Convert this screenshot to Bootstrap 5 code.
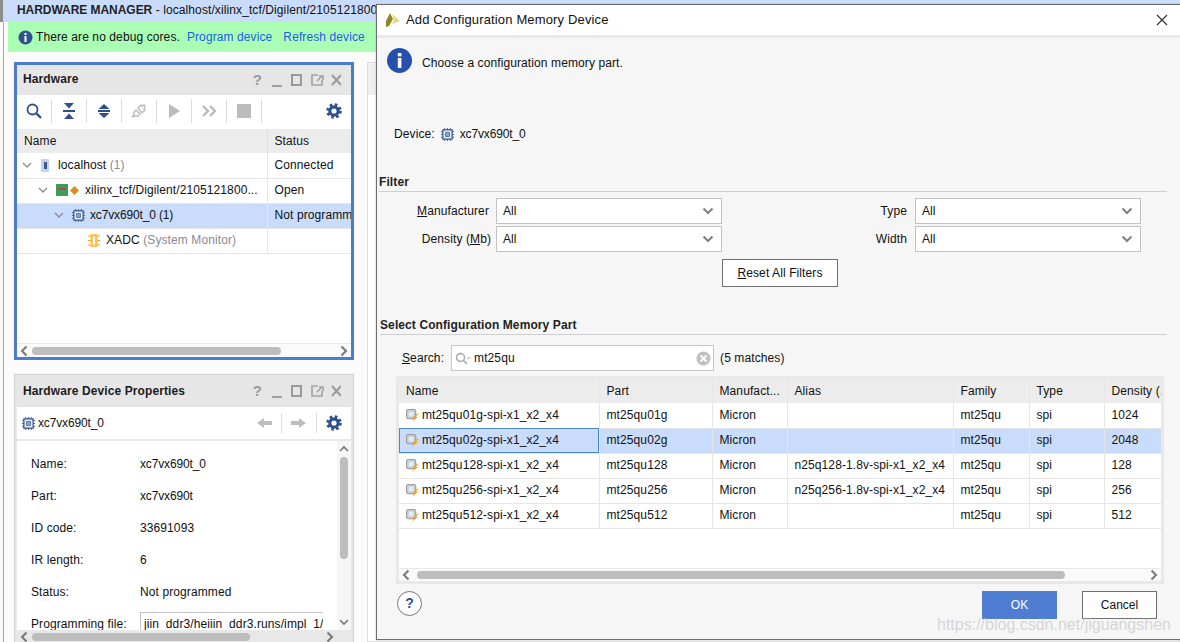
<!DOCTYPE html>
<html lang="en"><head><meta charset="utf-8"><title>Add Configuration Memory Device</title>
<link href="https://cdn.jsdelivr.net/npm/bootstrap@5.3.0/dist/css/bootstrap.min.css" rel="stylesheet">
<style>
html,body{margin:0;height:642px;overflow:hidden;background:#fff}
body{font-family:"Liberation Sans",Arial,sans-serif;font-size:12px;color:#111;line-height:1.2;letter-spacing:.1px}
.app{position:relative;width:1180px;height:642px;overflow:hidden;background:#fbfbfb}
.hm-bar{height:22px;background:#c9dcfb;border-left:3px solid #8d8d8d;padding:0 0 0 14px;line-height:20px;white-space:nowrap;overflow:hidden}
.hm-bar b{font-weight:700;color:#222;letter-spacing:-.05px}
.wsp{height:620px;border-left:1px solid #a8a8a8;margin-left:3px;padding-left:4px}
.dbg{height:30px;background:#aaffb5;padding-left:10px;gap:3px}
.dbg a{color:#1a5fe8;text-decoration:none;margin-left:4px}
.dbg a+a{margin-left:8px}
.paneswrap{padding:10px 0 0 6px;gap:13px}
.pcol{width:340px;flex:none}
.stub{flex:1;height:580px;background:#fff;border:1px solid #ddd}
.stubhd{height:32px;background:#eee}
.pane-a{height:298px;border:3px solid #4a7dcf;background:#fff;display:flex;flex-direction:column}
.pane-b{margin-top:14px;height:270px;border:1px solid #cfcfcf;border-bottom:0;padding:0 2px;background:#e8e8e8;display:flex;flex-direction:column}
.phead{height:30px;background:#e6e6e6;padding:0 6px;flex:none;font-weight:700;color:#1c1c1c}
.pane-b .phead{height:32px;margin:0 -2px;padding:0 8px}
.phead .ttl{position:relative;top:-1px}
.pane-b .phead .ttl{top:0}
.hicons{gap:9px;margin-right:4px;color:#9a9a9a;font-size:15px;font-weight:700;line-height:16px}
.hicons svg{display:block}
.tbar{height:32px;background:#fff;flex:none}
.tbtn{width:35px;height:24px;border-right:1px solid #ddd;justify-content:center}
.tend{margin-left:auto;margin-right:9px}
.trv{table-layout:fixed;width:334px;margin:2px 0 0;border-collapse:collapse;background:#fff;flex:none}
.trv td,.trv th{height:25px;padding:0 7px;font-weight:400;border-bottom:1px solid #e6e6e6;border-right:1px solid #e6e6e6;white-space:nowrap;overflow:hidden;background:transparent;box-shadow:none;color:#111;vertical-align:middle}
.trv th{height:24px;background:#ececec;border-bottom:0;border-right:1px solid #e0e0e0}
.trv td:last-child,.trv th:last-child{border-right:0}
.trv .sel td{background:#c9dcfb}
.c0{width:250px}
.dim{color:#8a8a94}
.chipn{letter-spacing:-.15px}
.tcell{gap:5px;white-space:nowrap;margin-left:-3px}
.ind1{padding-left:16px}
.ind2{padding-left:32px}
.ind3{padding-left:67px}
.ml2{margin-left:2px}
.ml3{margin-left:3px}
.dmd{margin-left:-3px}
.xt{margin-left:1px}
.hspc{flex:1}
.sbar-h{height:14px;flex:none;background:#fafafa;border-top:1px solid #e8e8e8;padding:0 2px}
.sbar-h .thumb{height:8px;background:#bdbdbd;border-radius:4px}
.sbar-h .trk{flex:1;padding:0 3px}
.th1{width:249px}
.th2{width:218px}
.th3{width:648px;margin-left:3px}
.sub{height:32px;margin:0 0 2px;background:#fff;flex:none;padding:0 9px 0 5px}
.sub .cn{margin-left:3px}
.navg{gap:8px}
.vsep{height:20px;border-left:1px solid #ddd}
.gr{margin-left:1px}
.ar{margin-right:2px}
.prow{flex:1;min-height:0;background:#fff;overflow:hidden}
.pbody{flex:1;padding:7px 14px 0;overflow:hidden;min-width:0}
.kv{height:32px;white-space:nowrap}
.kv .k{width:109px;flex:none}
.fileb{flex:1;height:24px;border:1px solid #c4c4c4;border-right:0;padding:4px 2px 0 3px;overflow:hidden;white-space:nowrap}
.sbar-v{width:14px;flex:none;background:#f6f6f6;align-items:center;padding:3px 0}
.sbar-v .vthumb{width:8px;height:102px;background:#bdbdbd;border-radius:4px;margin-top:3px}
.sbar-v .gp{flex:1}
.pane-b .sbar-h{border-top:0;background:#e8e8e8;margin:0;padding:0 2px}
.sb14{margin-right:14px}
.dlg{position:absolute;left:376px;top:4px;width:804px;height:636px;background:#f6f6f6;border:1px solid #6d6d6d;border-right:0;box-shadow:0 0 1px #888}
.dt{background:#fff;padding:0 8px 1px;font-size:13px;letter-spacing:.15px;border-bottom:3px solid #e8e8e8;box-sizing:content-box;height:29px}
.dt .nm{margin-left:5px}
.dinfo{padding:10px 0 0 10px;gap:10px;height:61px}
.dinfo span{position:relative;top:0}
.ddev{padding:0 0 0 17px;height:37px;margin-top:17px;gap:6px}
.sect{font-weight:700;color:#222;border-bottom:1px solid #cfcfcf;height:18px;margin-right:13px;margin-left:2px}
.s1{margin-top:21px;line-height:17px}
.fgrid{display:grid;grid-template-columns:117px 226px 193px 226px;grid-auto-rows:26px;row-gap:2px;margin-top:6px;margin-left:2px}
.fgrid label{text-align:right;align-self:center;padding-right:5px;margin:0}
.fgrid label.m{padding-right:7px}
.fgrid label.r{padding-right:8px}
.slc{background:#fff;border:1px solid #c2c2c2;padding:0 6px;justify-content:space-between}
.rbtn{display:block;width:116px;height:28px;margin:7px 0 0 345px;padding:0;background:#fff;border:1px solid #6f6f6f;border-radius:0;color:#111;font-size:12px;line-height:26px;text-align:center;letter-spacing:.1px}
.s2{margin-top:31px;height:17px;margin-left:3px}
.srow{margin:10px 0 0 25px;height:26px}
.sbox{width:263px;height:26px;background:#fff;border:1px solid #c8c8c8;margin-left:7px;margin-right:6px;padding:0 2px 0 3px;gap:3px}
.sbox .tx{flex:1}
.tfr{margin:5px 15px 0 19px;height:208px;border:3px solid #e8e8e8;background:#fff;display:flex;flex-direction:column;width:768px}
.tbl{table-layout:fixed;width:762px;border-collapse:collapse;margin:0;flex:none}
.tbl th,.tbl td{height:25px;padding:0 7px;font-weight:400;border-right:1px solid #e6e6e6;border-bottom:1px solid #e6e6e6;white-space:nowrap;overflow:hidden;background:transparent;box-shadow:none;color:#111;vertical-align:middle}
.tbl th{height:24px;background:#ececec;border-bottom:0}
.tbl .sel td{background:#c9dcfb}
.tbl .sel td:first-child{outline:1px solid #4a8ac4;outline-offset:-1px}
.tbl td:last-child,.tbl th:last-child{border-right:0}
.tbl .nmc{gap:3px}
.c1{width:200px}.c2{width:113px}.c3{width:75px}.c4{width:166px}.c5{width:76px}.c6{width:75px}
.tsp{flex:1;background:#fff}
.tfr .sbar-h{height:13px;background:#fafafa;border-top:1px solid #e8e8e8}
.dfoot{padding:7px 23px 0 20px}
.helpb{width:25px;height:25px;border:1px solid #777;border-radius:50%;background:#fff;color:#2d4f90;font-weight:700;font-size:14px;line-height:23px;text-align:center}
.okb{width:75px;height:28px;background:#4f7dd1;color:#fff;border:0;border-radius:0;font-size:12px;padding:0;margin-right:25px}
.cnb{width:75px;height:28px;background:#fff;color:#111;border:1px solid #6f6f6f;border-radius:0;font-size:12px;padding:0}
.wmk{position:absolute;left:937px;top:615px;font-size:16px;letter-spacing:0;color:rgba(190,190,190,.6);white-space:nowrap;pointer-events:none}
</style></head>
<body>
<svg width="0" height="0" class="d-none" aria-hidden="true">
<defs>
<symbol id="chip" viewBox="0 0 14 14"><path d="M4 0v14M7 0v14M10 0v14M0 4h14M0 7h14M0 10h14" stroke="#3b5a92" stroke-width="1"/><rect x="2" y="2" width="10" height="10" fill="#e6ebf4" stroke="#3b5a92" stroke-width="1.400"/><rect x="5" y="5" width="4" height="4" fill="#8ea4cb" stroke="#3b5a92" stroke-width=".8"/></symbol>
<symbol id="gear" viewBox="0 0 16 16"><circle cx="8" cy="8" r="4.200" fill="none" stroke="#2d4f90" stroke-width="3.200"/><circle cx="8" cy="8" r="6.500" fill="none" stroke="#2d4f90" stroke-width="2.600" stroke-dasharray="2.550 2.555"/></symbol>
<symbol id="part" viewBox="0 0 14 14"><rect x=".5" y=".5" width="10" height="10" rx="2" fill="#c6ccd4" stroke="#8f8f8f"/><rect x="3" y="3" width="5" height="5" fill="#e8ebef"/><path d="M12 5 7 9.500H9.500L6 14l7-5.500H10.500L13.500 5z" fill="#f2a41c"/></symbol>
<symbol id="cd" viewBox="0 0 14 14"><path d="M2.500 4.500l4.500 4.500 4.500-4.500" fill="none" stroke="#808080" stroke-width="2"/></symbol>
<symbol id="ct" viewBox="0 0 12 12"><path d="M2 4l4 4 4-4" fill="none" stroke="#8a8a8a" stroke-width="1.300"/></symbol>
<symbol id="cl" viewBox="0 0 10 12"><path d="M7.500 1.500 3 6l4.500 4.500" fill="none" stroke="#777" stroke-width="2"/></symbol>
<symbol id="cr" viewBox="0 0 10 12"><path d="M2.500 1.500 7 6l-4.500 4.500" fill="none" stroke="#777" stroke-width="2"/></symbol>
<symbol id="hd" viewBox="0 0 70 14"><path d="M1 13h10" stroke="#a0a0a0" stroke-width="2"/><rect x="21" y="2" width="9" height="10" fill="none" stroke="#9a9a9a" stroke-width="2"/><path d="M47 2h-6v10h10V7M46 8l5-5M48 3h4v4" fill="none" stroke="#a4a4a4" stroke-width="1.700"/><path d="M61 2l9 10M70 2l-9 10" stroke="#9a9a9a" stroke-width="2"/></symbol>
</defs></svg>
<div class="app">
 <div class="hm-bar"><b>HARDWARE MANAGER</b> - localhost/xilinx_tcf/Digilent/210512180081</div>
 <div class="wsp">
  <div class="dbg d-flex align-items-center">
   <svg width="15" height="15" viewBox="0 0 15 15"><circle cx="7.500" cy="7.500" r="7" fill="#30528f"/><rect x="6.500" y="6" width="2" height="6" fill="#fff"/><rect x="6.500" y="3" width="2" height="2" fill="#fff"/></svg>
   <span>There are no debug cores.</span><a href="#">Program device</a><a href="#">Refresh device</a>
  </div>
  <div class="paneswrap d-flex">
   <div class="pcol">
    <div class="pane-a">
     <div class="phead d-flex align-items-center justify-content-between"><span class="ttl">Hardware</span>
      <span class="hicons d-flex align-items-center"><span>?</span><svg width="70" height="14"><use href="#hd"/></svg></span></div>
     <div class="tbar d-flex align-items-center">
      <span class="tbtn d-flex align-items-center"><svg width="16" height="16" viewBox="0 0 16 16"><circle cx="6.500" cy="6.500" r="5" fill="none" stroke="#2d4f90" stroke-width="1.800"/><path d="M10.500 10.500 15 15" stroke="#2d4f90" stroke-width="2.400"/></svg></span>
      <span class="tbtn d-flex align-items-center"><svg width="14" height="16" viewBox="0 0 14 16"><path d="M2 0h10L7 5.500zM2 16h10L7 10.500zM1 7h12v2H1z" fill="#2d4f90"/></svg></span>
      <span class="tbtn d-flex align-items-center"><svg width="14" height="16" viewBox="0 0 14 16"><path d="M7 1 12.500 6H1.500zM7 15 1.500 10h11zM1 7h12v2H1z" fill="#2d4f90"/></svg></span>
      <span class="tbtn d-flex align-items-center"><svg width="16" height="16" viewBox="0 0 16 16"><path d="M1 14l2-2V9l2-2 4 4-2 2H4zM7 5l3-3 1 1 2-1 1 2-1 2 1 1-3 3z" fill="none" stroke="#bdbdbd" stroke-width="1.500"/></svg></span>
      <span class="tbtn d-flex align-items-center"><svg width="13" height="14" viewBox="0 0 13 14"><path d="M1 0l11 7-11 7z" fill="#bbb"/></svg></span>
      <span class="tbtn d-flex align-items-center"><svg width="15" height="12" viewBox="0 0 15 12"><path d="M1 1l5 5-5 5M8 1l5 5-5 5" fill="none" stroke="#b8b8b8" stroke-width="2.200"/></svg></span>
      <span class="tbtn d-flex align-items-center"><svg width="14" height="14"><rect width="14" height="14" fill="#bbb"/></svg></span>
      <span class="tend"><svg width="16" height="16" class="d-block"><use href="#gear"/></svg></span>
     </div>
     <table class="table trv">
      <colgroup><col class="c0"><col></colgroup>
      <thead><tr><th>Name</th><th>Status</th></tr></thead>
      <tbody>
       <tr><td><span class="tcell d-flex align-items-center"><svg width="12" height="12"><use href="#ct"/></svg><svg width="10" height="13" viewBox="0 0 10 13" class="ml2"><rect x="1" y="0" width="8" height="13" rx="1" fill="#c5d3e8"/><rect x="4" y="3" width="3" height="7" fill="#3b5a92"/></svg><span class="ml3">localhost <span class="dim">(1)</span></span></span></td><td>Connected</td></tr>
       <tr><td><span class="tcell d-flex align-items-center ind1"><svg width="12" height="12"><use href="#ct"/></svg><svg width="12" height="12" viewBox="0 0 12 12" class="ml2"><rect width="12" height="12" fill="#3f9c55"/><rect x="2" y="4" width="8" height="2" fill="#b04a4a"/></svg><svg width="9" height="9" viewBox="0 0 9 9" class="dmd"><path d="M4.500 0 9 4.500 4.500 9 0 4.500z" fill="#d08f25"/></svg><span class="xt">xilinx_tcf/Digilent/2105121800...</span></span></td><td>Open</td></tr>
       <tr class="sel"><td><span class="tcell d-flex align-items-center ind2"><svg width="12" height="12"><use href="#ct"/></svg><svg width="13" height="13" class="ml2"><use href="#chip"/></svg><span class="chipn">xc7vx690t_0 (1)</span></span></td><td>Not programmed</td></tr>
       <tr><td><span class="tcell d-flex align-items-center ind3"><svg width="12" height="13" viewBox="0 0 12 13"><path d="M0 2h12M0 6.500h12M0 11h12" stroke="#f0a020"/><rect x="2.500" y="0" width="7" height="13" fill="#fbc25a"/><rect x="5" y="2.500" width="2" height="8" fill="#fff"/></svg><span class="xt">XADC <span class="dim">(System Monitor)</span></span></span></td><td></td></tr>
      </tbody>
     </table>
     <div class="hspc"></div>
     <div class="sbar-h d-flex align-items-center"><svg width="10" height="12"><use href="#cl"/></svg><div class="trk"><div class="thumb th1"></div></div><svg width="10" height="12"><use href="#cr"/></svg></div>
    </div>
    <div class="pane-b">
     <div class="phead d-flex align-items-center justify-content-between"><span class="ttl">Hardware Device Properties</span>
      <span class="hicons d-flex align-items-center"><span>?</span><svg width="70" height="14"><use href="#hd"/></svg></span></div>
     <div class="sub d-flex align-items-center"><svg width="13" height="13"><use href="#chip"/></svg><span class="cn chipn">xc7vx690t_0</span>
      <span class="ms-auto d-flex align-items-center navg">
       <svg width="16" height="12" viewBox="0 0 16 12"><path d="M0 6l7-5v3h8v4H7v3z" fill="#bdbdbd"/></svg>
       <span class="vsep"></span>
       <svg width="16" height="12" viewBox="0 0 16 12" class="ar"><path d="M16 6 9 1v3H1v4h8v3z" fill="#bdbdbd"/></svg>
       <span class="vsep"></span>
       <svg width="16" height="16" class="gr"><use href="#gear"/></svg>
      </span></div>
     <div class="prow d-flex">
      <div class="pbody">
       <div class="kv d-flex align-items-center"><span class="k">Name:</span><span class="chipn">xc7vx690t_0</span></div>
       <div class="kv d-flex align-items-center"><span class="k">Part:</span><span class="chipn">xc7vx690t</span></div>
       <div class="kv d-flex align-items-center"><span class="k">ID code:</span><span>33691093</span></div>
       <div class="kv d-flex align-items-center"><span class="k">IR length:</span><span>6</span></div>
       <div class="kv d-flex align-items-center"><span class="k">Status:</span><span>Not programmed</span></div>
       <div class="kv d-flex align-items-center"><span class="k">Programming file:</span><div class="fileb">jiin_ddr3/heiiin_ddr3.runs/impl_1/top.bit</div></div>
      </div>
      <div class="sbar-v d-flex flex-column"><svg width="12" height="10" viewBox="0 0 12 10"><path d="M2 7l4-4 4 4" fill="none" stroke="#777" stroke-width="1.600"/></svg><div class="vthumb"></div><div class="gp"></div><svg width="12" height="10" viewBox="0 0 12 10"><path d="M2 3l4 4 4-4" fill="none" stroke="#777" stroke-width="1.600"/></svg></div>
     </div>
     <div class="sbar-h d-flex align-items-center"><svg width="10" height="12"><use href="#cl"/></svg><div class="trk"><div class="thumb th2"></div></div><svg width="10" height="12" class="sb14"><use href="#cr"/></svg></div>
    </div>
   </div>
   <div class="stub"><div class="stubhd"></div></div>
  </div>
 </div>

 <div class="dlg">
  <div class="dt d-flex align-items-center">
   <svg width="16" height="16" viewBox="0 0 16 16"><path d="M5 1 8 7 4 14 1 15 1 9z" fill="#8c8a1e"/><path d="M7 2l8 7-8 3 2-5z" fill="#dcd989"/></svg>
   <span class="nm">Add Configuration Memory Device</span>
   <svg width="12" height="12" viewBox="0 0 12 12" class="ms-auto me-1"><path d="M1 1l10 10M11 1 1 11" stroke="#333" stroke-width="1.200"/></svg>
  </div>
  <div class="dinfo d-flex align-items-start">
   <svg width="25" height="25" viewBox="0 0 25 25"><circle cx="12.500" cy="12.500" r="12.500" fill="#2750ad"/><rect x="10.800" y="10" width="3.600" height="10" fill="#fff"/><rect x="10.800" y="5" width="3.600" height="3.400" fill="#fff"/></svg>
   <span class="mt-1 pt-1">Choose a configuration memory part.</span>
  </div>
  <div class="ddev d-flex align-items-center"><span>Device:</span><svg width="13" height="13"><use href="#chip"/></svg><span class="chipn">xc7vx690t_0</span></div>
  <div class="sect s1">Filter</div>
  <div class="fgrid">
   <label class="m"><u>M</u>anufacturer</label><div class="slc d-flex align-items-center"><span>All</span><svg width="14" height="14"><use href="#cd"/></svg></div>
   <label class="r">Type</label><div class="slc d-flex align-items-center"><span>All</span><svg width="14" height="14"><use href="#cd"/></svg></div>
   <label>Density (<u>M</u>b)</label><div class="slc d-flex align-items-center"><span>All</span><svg width="14" height="14"><use href="#cd"/></svg></div>
   <label class="r">Width</label><div class="slc d-flex align-items-center"><span>All</span><svg width="14" height="14"><use href="#cd"/></svg></div>
  </div>
  <button type="button" class="btn rbtn"><u>R</u>eset All Filters</button>
  <div class="sect s2">Select Configuration Memory Part</div>
  <div class="srow d-flex align-items-center"><span><u>S</u>earch:</span>
   <div class="sbox d-flex align-items-center">
    <svg width="16" height="13" viewBox="0 0 16 13"><circle cx="5.500" cy="5.500" r="4" fill="none" stroke="#a5a5a5" stroke-width="1.400"/><path d="M8.500 8.500 12 12" stroke="#a5a5a5" stroke-width="1.500"/><path d="M12 6h3.500" stroke="#a5a5a5"/></svg>
    <span class="tx">mt25qu</span>
    <svg width="15" height="15" viewBox="0 0 15 15"><circle cx="7.500" cy="7.500" r="7" fill="#c0c0c0"/><path d="M4.500 4.500l6 6M10.500 4.500l-6 6" stroke="#fff" stroke-width="1.800"/></svg>
   </div><span>(5 matches)</span></div>
  <div class="tfr">
   <table class="table tbl">
    <colgroup><col class="c1"><col class="c2"><col class="c3"><col class="c4"><col class="c5"><col class="c6"><col></colgroup>
    <thead><tr><th>Name</th><th>Part</th><th>Manufact...</th><th>Alias</th><th>Family</th><th>Type</th><th>Density (...</th></tr></thead>
    <tbody>
     <tr><td><span class="nmc d-flex align-items-center"><svg width="13" height="13"><use href="#part"/></svg>mt25qu01g-spi-x1_x2_x4</span></td><td>mt25qu01g</td><td>Micron</td><td></td><td>mt25qu</td><td>spi</td><td>1024</td></tr>
     <tr class="sel"><td><span class="nmc d-flex align-items-center"><svg width="13" height="13"><use href="#part"/></svg>mt25qu02g-spi-x1_x2_x4</span></td><td>mt25qu02g</td><td>Micron</td><td></td><td>mt25qu</td><td>spi</td><td>2048</td></tr>
     <tr><td><span class="nmc d-flex align-items-center"><svg width="13" height="13"><use href="#part"/></svg>mt25qu128-spi-x1_x2_x4</span></td><td>mt25qu128</td><td>Micron</td><td>n25q128-1.8v-spi-x1_x2_x4</td><td>mt25qu</td><td>spi</td><td>128</td></tr>
     <tr><td><span class="nmc d-flex align-items-center"><svg width="13" height="13"><use href="#part"/></svg>mt25qu256-spi-x1_x2_x4</span></td><td>mt25qu256</td><td>Micron</td><td>n25q256-1.8v-spi-x1_x2_x4</td><td>mt25qu</td><td>spi</td><td>256</td></tr>
     <tr><td><span class="nmc d-flex align-items-center"><svg width="13" height="13"><use href="#part"/></svg>mt25qu512-spi-x1_x2_x4</span></td><td>mt25qu512</td><td>Micron</td><td></td><td>mt25qu</td><td>spi</td><td>512</td></tr>
    </tbody>
   </table>
   <div class="tsp"></div>
   <div class="sbar-h d-flex align-items-center"><svg width="10" height="12"><use href="#cl"/></svg><div class="trk"><div class="thumb th3"></div></div><svg width="10" height="12"><use href="#cr"/></svg></div>
  </div>
  <div class="dfoot d-flex align-items-start justify-content-between">
   <div class="helpb">?</div>
   <div class="d-flex"><button type="button" class="btn okb">OK</button><button type="button" class="btn cnb">Cancel</button></div>
  </div>
 </div>
 <div class="wmk">https://blog.csdn.net/jiguangshen</div>
</div>
<script src="https://cdn.jsdelivr.net/npm/bootstrap@5.3.0/dist/js/bootstrap.bundle.min.js"></script>
</body></html>
